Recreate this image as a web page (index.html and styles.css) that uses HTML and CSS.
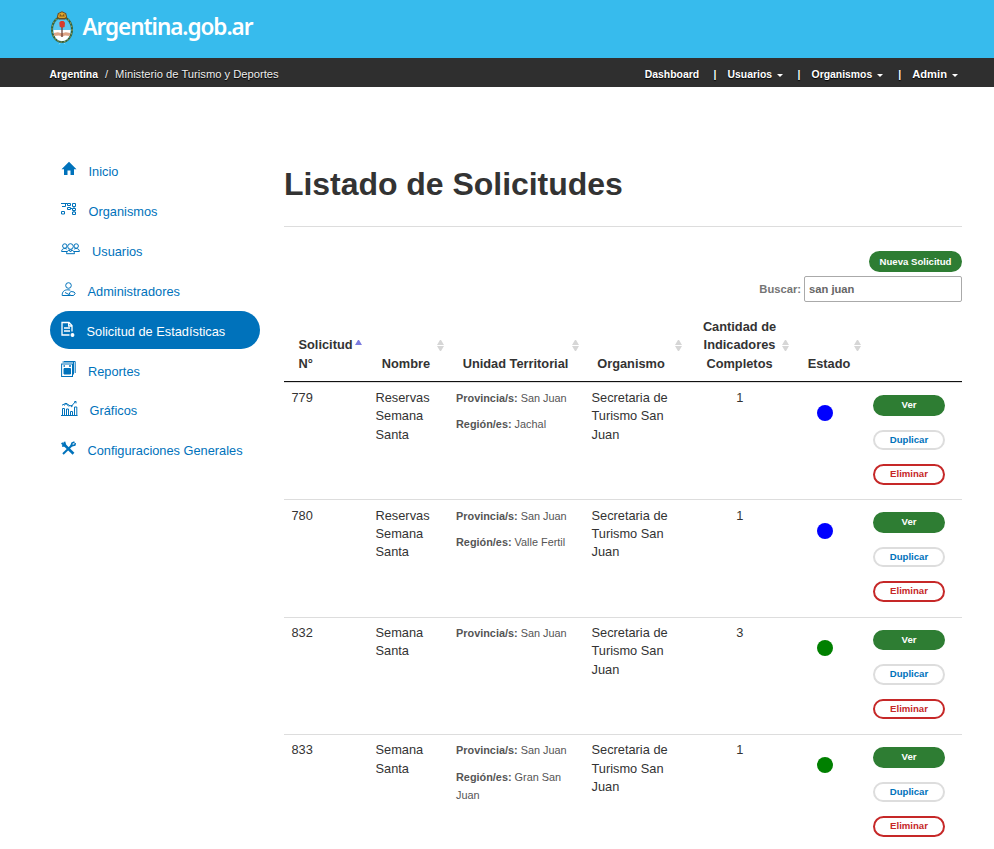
FILE: index.html
```html
<!DOCTYPE html>
<html lang="es">
<head>
<meta charset="utf-8">
<title>Listado de Solicitudes</title>
<link rel="stylesheet" href="styles.css">
</head>
<body>
<header class="brand">
  <svg class="crest" width="24" height="36" viewBox="0 0 24 36">
    <path d="M8 31l4-2 4 2-2 .5 1.500 3-3.500-2.500L8.500 35l1.500-3z" fill="#8fdcf7"/>
    <ellipse cx="12" cy="19.500" rx="10" ry="12.500" fill="none" stroke="#35613c" stroke-width="2"/>
    <ellipse cx="12" cy="19.500" rx="10" ry="12.500" fill="none" stroke="#8b9b5c" stroke-width="1.200" stroke-dasharray="1.500 2"/>
    <ellipse cx="12" cy="20" rx="8.800" ry="11" fill="#5bc6ee"/>
    <path d="M3.500 20h17c0 6.500-3.500 11-8.500 11s-8.500-4.500-8.500-11z" fill="#fff"/>
    <path d="M3.800 23l4-.8 4 1 4-1 4.400.8-.5 3-4.700-.6-3 1.300-3-1.300-4.700.6z" fill="#dda486"/>
    <path d="M12 14v13" stroke="#64352d" stroke-width="1.200"/>
    <path d="M9.300 12.500l1.600-1.600h2.600l1.500 1.800-.4 4.200-2.600.9-2.300-1.100z" fill="#d83b2b"/>
    <path d="M6.800 7.200L7.800 3.300 12 1.200l4.200 2.100 1 3.900-2 2.200H8.800z" fill="#6b4b22"/>
    <path d="M7.800 7l1-3.300 3.200-1.400 3.200 1.400 1 3.300-1.700 1h-5z" fill="#dca62b"/>
    <path d="M9.300 6h5.400M10 4l.8 2M14 4l-.8 2" stroke="#6d4a19" stroke-width=".8"/>
  </svg>
  <span class="brand-name">Argentina.gob.ar</span>
</header>
<nav class="topbar">
  <div class="crumbs"><b>Argentina</b><span class="slash">/</span><span>Ministerio de Turismo y Deportes</span></div>
  <div class="menu">
    <a>Dashboard</a><i class="bar b1">|</i>
    <a>Usuarios<em class="caret"></em></a><i class="bar b2">|</i>
    <a>Organismos<em class="caret"></em></a><i class="bar b3">|</i>
    <a class="admin">Admin<em class="caret"></em></a>
  </div>
</nav>
<div class="page">
  <aside class="side">
    <a class="item"><svg width="16" height="16" viewBox="0 0 16 16"><path d="M8 .8L.5 8.200H3V14h3.500V9.500h3V14H13V8.200h2.500z" fill="currentColor"/></svg><span class="g1">Inicio</span></a>
    <a class="item"><svg width="16" height="16" viewBox="0 0 16 16" fill="none" stroke="currentColor"><path d="M0 2.500h4.500v3H1M6.500 2.500h3v2h-3zM11.500 2.500h3v3h-3zM6.500 6.500h3v2h-3zM11.500 7.500h3v2h-3zM.5 10.500h3v2.500h-3zM11.500 11h3v2.500h-3zM4 2.500h2.500M9.500 7.500h2M13 5.500v2M13 9.500v1.500"/></svg><span class="g1">Organismos</span></a>
    <a class="item"><svg width="19" height="16" viewBox="0 0 19 16" fill="none" stroke="currentColor" stroke-width="1"><circle cx="3.800" cy="5" r="2.200"/><circle cx="15.200" cy="5" r="2.200"/><circle cx="9.500" cy="5.500" r="2.800"/><path d="M6 10.500H.6c0-2 1.400-3 3.200-3 .8 0 1.500.2 2 .6M13 10.500h5.400c0-2-1.400-3-3.200-3-.8 0-1.500.2-2 .6M5.500 12.700c0-2.200 1.600-3.900 4-3.900s4 1.700 4 3.900zM8 9l1.500 2L11 9"/></svg><span class="g3">Usuarios</span></a>
    <a class="item"><svg width="15" height="16" viewBox="0 0 15 16" fill="none" stroke="currentColor"><circle cx="7.500" cy="4.500" r="2.800"/><path d="M9 14.500H1.200C1 11 3 8.800 6.800 8.800l2.500.3M8.300 12l1.800-1.500 3 .5 1 1.500-1.500 2H9.200zM4 11.500l4 2"/></svg><span class="g2">Administradores</span></a>
    <a class="item active"><svg width="14" height="16" viewBox="0 0 14 16" fill="none" stroke="currentColor" stroke-width="1.300"><path d="M8.500 14H1V1.500h7l3 3v6M7.700 1.500v3.500H11M3 7h6M3 10h6"/><circle cx="11.500" cy="14" r="1.300" fill="currentColor"/></svg><span class="g4">Solicitud de Estadísticas</span></a>
    <a class="item"><svg width="16" height="18" viewBox="0 0 16 18" fill="none" stroke="currentColor"><rect x=".6" y="3" width="10.900" height="12.500"/><path d="M1.500 1h11v12.500M3 .5h11.200V12"/><path d="M3 7.500h6.500v5.500H3z" fill="currentColor"/><path d="M2.500 5h1.500M8 5h2" stroke-width="1.300"/></svg><span class="g5">Reportes</span></a>
    <a class="item up"><svg width="17" height="17" viewBox="0 0 17 17" fill="none" stroke="currentColor"><path d="M0 15.500h16.500M1.500 15.500v-7h2v7M5.500 15.500V9h2v6.500M9.500 15.500V11.500h2v4M13.500 15.500V7h2.300v8.500M1 5.200l4-2 4 2.600 2-.3L15 1M13 2l2-.6v2M3 5.500L5 3.600l3 3M10 7l2-1.500"/></svg><span class="g6">Gráficos</span></a>
    <a class="item up"><svg width="15" height="16" viewBox="0 0 15 16" fill="none" stroke="currentColor"><path d="M3 4.500l9.500 9.300" stroke-width="2.600"/><path d="M2 14L11.500 4.800" stroke-width="2"/><path d="M.6 3l2.500 2M3.300 1.800l1 3.500-3.200.8" stroke-width="2"/><path d="M10 6l1-3 2.500-1M10.800 5.800l3-.8.6-2" stroke-width="1.600"/></svg><span class="g2">Configuraciones Generales</span></a>
  </aside>
  <main class="main">
    <h1>Listado de Solicitudes</h1>
    <div class="tools">
      <a class="btn green new">Nueva Solicitud</a>
      <label class="search">Buscar:<input type="text" value="san juan"></label>
    </div>
    <table>
      <colgroup><col class="c1"><col class="c2"><col class="c3"><col class="c4"><col class="c5"><col class="c6"><col class="c7"></colgroup>
      <thead><tr>
        <th class="first">Solicitud N°<i class="sort asc"></i></th>
        <th class="h2">Nombre<i class="sort"></i></th>
        <th class="h3">Unidad Territorial<i class="sort"></i></th>
        <th class="h4">Organismo<i class="sort"></i></th>
        <th class="h5">Cantidad de Indicadores Completos<i class="sort"></i></th>
        <th>Estado<i class="sort"></i></th>
        <th></th>
      </tr></thead>
      <tbody>
        <tr><td>779</td><td>Reservas Semana Santa</td><td class="unit"><p><b>Provincia/s:</b> San Juan</p><p><b>Región/es:</b> Jachal</p></td><td class="org">Secretaria de Turismo San Juan</td><td class="num">1</td><td class="state"><i class="dot blue"></i></td><td class="acts"><a class="btn green">Ver</a><a class="btn dup">Duplicar</a><a class="btn del">Eliminar</a></td></tr>
        <tr><td>780</td><td>Reservas Semana Santa</td><td class="unit"><p><b>Provincia/s:</b> San Juan</p><p><b>Región/es:</b> Valle Fertil</p></td><td class="org">Secretaria de Turismo San Juan</td><td class="num">1</td><td class="state"><i class="dot blue"></i></td><td class="acts"><a class="btn green">Ver</a><a class="btn dup">Duplicar</a><a class="btn del">Eliminar</a></td></tr>
        <tr><td>832</td><td>Semana Santa</td><td class="unit"><p><b>Provincia/s:</b> San Juan</p></td><td class="org">Secretaria de Turismo San Juan</td><td class="num">3</td><td class="state"><i class="dot"></i></td><td class="acts"><a class="btn green">Ver</a><a class="btn dup">Duplicar</a><a class="btn del">Eliminar</a></td></tr>
        <tr><td>833</td><td>Semana Santa</td><td class="unit"><p><b>Provincia/s:</b> San Juan</p><p><b>Región/es:</b> Gran San Juan</p></td><td class="org">Secretaria de Turismo San Juan</td><td class="num">1</td><td class="state"><i class="dot"></i></td><td class="acts"><a class="btn green">Ver</a><a class="btn dup">Duplicar</a><a class="btn del">Eliminar</a></td></tr>
      </tbody>
    </table>
  </main>
</div>
</body>
</html>
```
FILE: styles.css
```css
* { box-sizing: border-box; }
body {
  margin: 0;
  height: 849px;
  overflow: hidden;
  font: 12.8px/18.286px "Liberation Sans", Arial, sans-serif;
  color: #333;
  background: #fff;
}
i, em { font-style: normal; }

.brand {
  height: 58px;
  padding: 10px 0 0 50px;
  display: flex;
  background: #37bbed;
}
.brand-name {
  margin: 1px 0 0 8.5px;
  font: 600 22.5px/32px "Noto Sans", sans-serif;
  letter-spacing: -1.05px;
  color: #fff;
}

.topbar {
  height: 29px;
  padding: 5px 36px 0 49.5px;
  display: flex;
  justify-content: space-between;
  align-items: center;
  background: #2f2f2f;
  color: #fff;
  font-size: 10.4px;
  text-shadow: 0 1px 1px #000;
}
.crumbs { display: flex; }
.crumbs b, .menu { padding-top: 1px; }
.crumbs span { font-size: 11.2px; color: #eee; }
.crumbs .slash { margin: 0 7px; }
.menu { display: flex; font-weight: bold; white-space: nowrap; }
.bar { width: 3px; text-align: center; }
.b1 { margin: 0 11px 0 14.5px; }
.b2, .b3 { margin: 0 11px 0 14.5px; }
.b3 { margin-left: 15px; }
.admin { margin-top: -1px; font-size: 11.2px; }
.caret {
  display: inline-block;
  margin-left: 5px;
  vertical-align: middle;
  border-top: 3px solid #fff;
  border-left: 3px solid transparent;
  border-right: 3px solid transparent;
}

.page { display: flex; padding: 64px 32px 0 50px; }
.side { width: 210px; margin-right: 24px; }
.item {
  display: flex;
  height: 38px;
  margin-bottom: 2px;
  padding: 10px 0 0 11px;
  color: #0072bb;
  border-radius: 19px;
  white-space: nowrap;
}
.item svg { display: block; flex: none; }
.item span { margin-top: 2px; }
.item.up { padding-top: 9px; }
.g1, .g2, .g4, .g6 { margin-left: 11.5px; }
.g3 { margin-left: 12px; }
.g5 { margin-left: 11px; }
.active { background: #0072bb; color: #fff; }

.main { width: 678px; }
h1 {
  margin: 0;
  height: 76px;
  padding-top: 13px;
  font-size: 32px;
  line-height: 40px;
  letter-spacing: -.04px;
  border-bottom: 1px solid #ddd;
}
.tools {
  display: flex;
  flex-direction: column;
  align-items: flex-end;
  padding-top: 24px;
}
.btn {
  display: block;
  width: 72px;
  height: 20.5px;
  border: 2px solid #2e7d33;
  border-radius: 11px;
  text-align: center;
  font: bold 9.6px/16.5px "Liberation Sans", Arial, sans-serif;
}
.green { background: #2e7d33; color: #fff; }
.dup { border-color: #ddd; color: #0072bb; }
.del { border-color: #c62828; color: #c62828; }
.new { width: 93px; height: 21px; line-height: 18px; }
.search {
  display: flex;
  align-items: center;
  margin-top: 4px;
  font-size: 11.2px;
  font-weight: bold;
  color: #757575;
}
.search input {
  width: 158px;
  height: 26px;
  margin: 0 0 0 3px;
  padding: 0 4px;
  border: 1px solid #aaa;
  border-radius: 2px;
  font: inherit;
  color: #666;
}

table {
  width: 678px;
  margin-top: 8px;
  table-layout: fixed;
  border-collapse: separate;
  border-spacing: 0;
}
.c1 { width: 84px; }
.c2 { width: 81px; }
.c3 { width: 135px; }
.c4 { width: 103px; }
.c5 { width: 106px; }
.c6 { width: 72px; }
.c7 { width: 97px; }
th {
  position: relative;
  height: 72px;
  padding: 8px 0 8px;
  vertical-align: bottom;
  border-bottom: 1px solid #111;
}
.first { padding-left: 14.5px; padding-right: 14px; text-align: left; }
.h2 { padding-right: 5px; }
.h3 { padding-right: 2px; }
.h4 { padding-right: 9px; }
.h5 { padding-left: 13px; padding-right: 14px; }
.sort { position: absolute; right: 5px; bottom: 29.5px; width: 7px; height: 12px; }
.h5 .sort, .h5 + th .sort { right: 4px; }
.sort::before, .sort::after {
  content: "";
  display: block;
  border: 3.5px solid transparent;
  border-top: 0;
  border-bottom: 5px solid #d6d6d6;
}
.sort::after {
  margin-top: 1px;
  border-top: 5px solid #d6d6d6;
  border-bottom: 0;
}
.first .asc { right: 6px; bottom: 29px; }
.asc::before { border-bottom-color: #7c7ce0; }
.asc::after { visibility: hidden; }
td {
  height: 117.4px;
  padding: 6.2px 8px 0 7.5px;
  vertical-align: top;
  border-top: 1px solid #ddd;
}
.unit { padding-left: 7px; font-size: 10.88px; color: #555; }
.unit p { margin: 0 0 8px; }
.org { padding-right: 14px; }
.num { text-align: center; }
.state { padding: 22.200px 8px 0 0; }
.dot { display: block; width: 16px; height: 16px; margin: 0 auto; border-radius: 50%; background: green; }
.blue { background: blue; }
.acts { padding: 12px 0 0 8px; }
.acts .btn { margin-bottom: 14px; }
.acts .btn:last-child { margin-bottom: 0; }
```
